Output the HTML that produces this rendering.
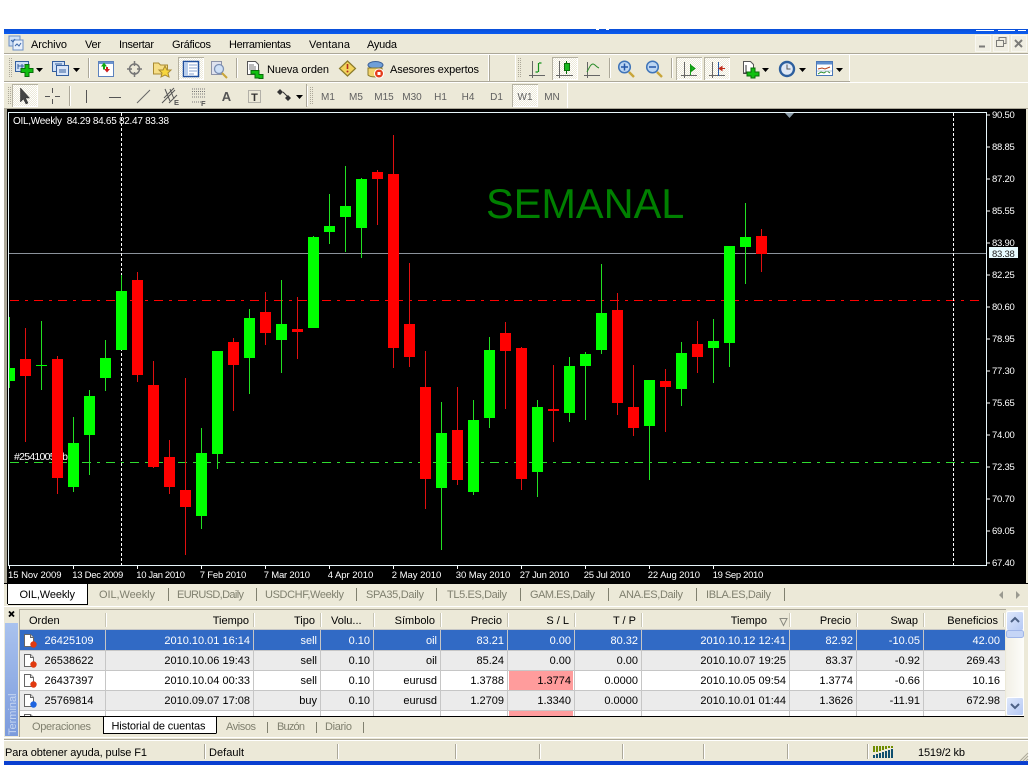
<!DOCTYPE html>
<html lang="es"><head><meta charset="utf-8"><title>MetaTrader</title>
<style>
html,body{margin:0;padding:0;background:#fff;width:1032px;height:765px;overflow:hidden}
svg{display:block;font-family:"Liberation Sans",sans-serif;font-size:11px}
.r{text-anchor:end}.m{text-anchor:middle}
.g{fill:#80806f}.tf{fill:#5f5f5f;font-size:10px;text-anchor:middle}
.c{fill:#fff;font-size:9.5px}
.p{letter-spacing:-.25px}
.w{fill:#fff}
</style></head><body>
<svg width="1032" height="765" viewBox="0 0 1032 765" xmlns="http://www.w3.org/2000/svg">
<defs>
<pattern id="dith" width="2" height="2" patternUnits="userSpaceOnUse"><rect width="2" height="2" fill="#ece9d8"/><rect width="1" height="1" fill="#fff"/><rect x="1" y="1" width="1" height="1" fill="#fff"/></pattern>
<linearGradient id="tb" x1="0" y1="0" x2="0" y2="1"><stop offset="0" stop-color="#0a4fd8"/><stop offset="1" stop-color="#0a5cf0"/></linearGradient>
<linearGradient id="side" x1="0" y1="0" x2="0" y2="1"><stop offset="0" stop-color="#a9c2ee"/><stop offset="1" stop-color="#7c9bdc"/></linearGradient>
<linearGradient id="sb" x1="0" y1="0" x2="1" y2="1"><stop offset="0" stop-color="#dfe8fb"/><stop offset="1" stop-color="#b4c8f4"/></linearGradient>
<linearGradient id="tr" x1="0" y1="0" x2="1" y2="0"><stop offset="0" stop-color="#f2f0e6"/><stop offset="1" stop-color="#fdfdfa"/></linearGradient>
<clipPath id="ch"><rect x="9" y="113" width="977" height="452"/></clipPath>
<clipPath id="tbl"><rect x="20" y="610" width="986" height="106"/></clipPath>
<g id="ord"><path d="M1.500 .5H7.500L10.500 3.500V12.500H1.500Z" fill="#fff" stroke="#666"/><path d="M7.500 .5V3.500H10.500" fill="#ddd" stroke="#666"/></g>
</defs>

<!-- window frame -->
<rect x="4" y="29" width="1024" height="736" fill="#ece9d8"/>
<rect x="4" y="29" width="1024" height="5" fill="url(#tb)"/>
<rect x="4" y="761" width="1024" height="4" fill="#0a3fd0"/>
<path d="M596 29.500h3M606 29.500h3M976 30.500h18M998 30.500h17M1018 30.500h8" stroke="#fff" fill="none"/>

<!-- menu bar -->
<g>
<rect x="9" y="36" width="11" height="10" fill="#cfe0f6" stroke="#6d8fc4"/><rect x="13" y="40" width="10" height="10" fill="#e8f0fb" stroke="#6d8fc4"/><path d="M11 40l2 2 2-3M15 46l2-2 2 2 2-3" stroke="#3a66a8" fill="none"/>
<text x="31" y="48" textLength="36">Archivo</text><text x="85" y="48" textLength="16">Ver</text><text x="119" y="48" textLength="35">Insertar</text><text x="172" y="48" textLength="39">Gráficos</text><text x="229" y="48" textLength="62">Herramientas</text><text x="309" y="48" textLength="41">Ventana</text><text x="367" y="48" textLength="30">Ayuda</text>
</g>
<!-- window buttons -->
<g fill="#f0eee2" stroke="#f8f7f1"><rect x="975.500" y="35.500" width="15" height="16"/><rect x="993.500" y="35.500" width="15" height="16"/><rect x="1011.500" y="35.500" width="15" height="16"/></g>
<path d="M979 46.500h6" stroke="#7b7b78" stroke-width="2"/>
<path d="M996.500 40.500h7v6h-7zM999 40v-2.500h7v6h-2" fill="none" stroke="#7b7b78"/>
<path d="M1015 40l7 7M1022 40l-7 7" stroke="#7b7b78" stroke-width="2"/>

<!-- toolbar lines -->
<path d="M4 53.500H1028M4 81.500H850M4 108.500H1028" stroke="#aca899"/>
<path d="M4 54.500H1028M4 82.500H1028" stroke="#fff"/>
<path d="M488.500 55V81M515.500 55V81M849.500 55V81M567.500 83V108" stroke="#fff"/>
<path d="M489.500 55V81M306.500 84V107" stroke="#aca899"/>
<path d="M9.500 58V78M11.500 58V78M518.500 58V78M520.500 58V78M8.500 87V105M10.500 87V105M310.500 87V105M312.500 87V105" stroke="#aca899" stroke-dasharray="1 1"/>
<path d="M88.500 58V78M236.500 58V78M609.500 58V78M671.500 58V78M69.500 86V106M306.500 86V106" stroke="#aca899"/>
<path d="M89.500 58V78M237.500 58V78M610.500 58V78M672.500 58V78M70.500 86V106M307.500 86V106" stroke="#fff"/>

<!-- pressed buttons -->
<g fill="url(#dith)" stroke="#b5b2a2"><rect x="178.500" y="57.500" width="25" height="22"/><rect x="552.500" y="57.500" width="25" height="22"/><rect x="676.500" y="57.500" width="25" height="22"/><rect x="704.500" y="57.500" width="25" height="22"/><rect x="12.500" y="84.500" width="25" height="22"/><rect x="512.500" y="84.500" width="25" height="22"/></g>
<path d="M203.500 58V79.500H179M577.500 58V79.500H553M701.500 58V79.500H677M729.500 58V79.500H705M37.500 85V106.500H13M537.500 85V106.500H513" stroke="#fff" fill="none"/>

<!-- toolbar 1 icons -->
<g>
<rect x="15.500" y="61.500" width="13" height="10" fill="#cfe0f6" stroke="#345f9e"/><path d="M18 64v5M22 64v5M18 66h6" stroke="#345f9e"/>
<path d="M25 64.500h4v4h4v4h-4v4h-4v-4h-4v-4h4z" fill="#11c011" stroke="#0a6d0a"/>
<path d="M36 68h7l-3.500 4z" fill="#000"/>
<rect x="52.500" y="61.500" width="12" height="10" fill="#cfe0f6" stroke="#345f9e"/><rect x="56.500" y="65.500" width="12" height="10" fill="#dbe7f8" stroke="#345f9e"/><path d="M55 64h7M59 70h7M59 72h7" stroke="#345f9e"/>
<path d="M73 68h7l-3.500 4z" fill="#000"/>
<rect x="98.500" y="61.500" width="15" height="15" fill="#fff" stroke="#5c82bd"/><rect x="99" y="62" width="14" height="2" fill="#6d95d0"/><path d="M104 62.500l3 4h-2v3h-2v-3h-2z" fill="#11a811"/><path d="M105 71.500l-3-3.500h2v-2h2v2h2z" fill="#d01f1f" transform="translate(2 1)"/>
<circle cx="134.500" cy="69" r="5" fill="none" stroke="#777" stroke-width="1.500"/><path d="M134.500 61v5M134.500 72v5M127 69h5M137 69h5" stroke="#777" stroke-width="1.500"/>
<path d="M153.500 63h5l2 2h7v9h-14z" fill="#f6de86" stroke="#a98a32"/><path d="M165 66l2 4h4l-3 3 1 4-4-2-4 2 1-4-3-3h4z" fill="#f7d63e" stroke="#a98a32"/>
<rect x="183.500" y="61.500" width="15" height="15" fill="#fff" stroke="#1f4f9e" stroke-width="1.500"/><rect x="184" y="62" width="4" height="14" fill="#b7cdec"/><path d="M189 65h8M189 68h8M189 71h8M189 74h5" stroke="#8ba6cf"/>
<rect x="211.500" y="61.500" width="10" height="13" fill="#dfe2ee" stroke="#8d93a8"/><circle cx="219" cy="69" r="4.500" fill="#cfe0f6" stroke="#7b8fb3" stroke-width="1.300"/><path d="M222 73l5 5" stroke="#c9a53a" stroke-width="2"/>
<path d="M247.500 61.500h8l3 3v10h-11z" fill="#fff" stroke="#555"/><path d="M249 65h5M249 67h7M249 69h7" stroke="#777"/>
<path d="M254 71.500h4v4h4v4h-4v-.5h-4v-4h-4v-3.500h4z" fill="#11c011" stroke="#0a6d0a" transform="translate(1 -1)"/>
<text x="267" y="73" textLength="62">Nueva orden</text>
<path d="M347.500 61l8 7.500-8 7.500-8-7.500z" fill="#f2d35c" stroke="#8a7a2a" stroke-width="1.200"/><path d="M347.500 64v5" stroke="#b3301d" stroke-width="1.600"/><circle cx="347.500" cy="71.500" r="1" fill="#b3301d"/>
<ellipse cx="375.500" cy="65" rx="7.500" ry="3.500" fill="#6f9fd8" stroke="#3a5f98"/><path d="M368 68h14v7c-2 2-11 3-14 0z" fill="#f2d36d" stroke="#8a7a2a"/><circle cx="379" cy="73.500" r="4.500" fill="#e53d1c" stroke="#fff"/><rect x="377.500" y="72" width="3" height="3" fill="#fff"/>
<text x="390" y="73" textLength="89">Asesores expertos</text>
</g>

<!-- chart type icons etc -->
<g fill="none" stroke="#666">
<path d="M532.500 61V78M529 75.500h16"/><path d="M538.500 63V72M538 72h-2.500M539 63h2.500" stroke="#13921a" stroke-width="1.200"/>
<path d="M559.500 61V78M556 75.500h17"/><path d="M566.500 61V74" stroke="#0a6d0a"/><rect x="564.500" y="63.500" width="5" height="7" fill="#17b81e" stroke="#0a6d0a"/>
<path d="M587.500 62V78M584 75.500h16"/><path d="M587 72c3-6 4-8 6-8s3 3 6 4" stroke="#2a8c2a"/>
<path d="M684.500 62V78M681 75.500h16"/><path d="M690.500 64V75" stroke="#17a81e"/><path d="M691 65.500l4 3-4 3z" fill="#17b81e" stroke="#0a8c0a"/>
<path d="M712.500 62V78M709 75.500h16"/><path d="M718.500 62V76" stroke="#2457a8"/><path d="M725 68.500h-5" stroke="#c02a1a"/><path d="M722 66.500l-3 2 3 2z" fill="#c02a1a" stroke="#c02a1a"/>
</g>
<g>
<circle cx="624.500" cy="67" r="5.800" fill="#bcd6f2" stroke="#3f74b8" stroke-width="1.500"/><path d="M621 67h7M624.500 63.500v7" stroke="#2457a8" stroke-width="1.500"/><path d="M629 72l5 5" stroke="#c9a53a" stroke-width="2.400"/>
<circle cx="652.500" cy="67" r="5.800" fill="#bcd6f2" stroke="#3f74b8" stroke-width="1.500"/><path d="M649 67h7" stroke="#2457a8" stroke-width="1.500"/><path d="M657 72l5 5" stroke="#c9a53a" stroke-width="2.400"/>
<path d="M743.500 61.500h7l3 3v9h-10z" fill="#fff" stroke="#555"/><path d="M746 65v8M746 73h-2" stroke="#333"/>
<path d="M751 69h4v4h4v4h-4v2h-4v-2h-4v-4h4z" fill="#11c011" stroke="#0a6d0a" transform="translate(0 -1)"/>
<path d="M762 68h7l-3.500 4z" fill="#000"/>
<circle cx="787" cy="69" r="7" fill="#dfe8f5" stroke="#2d5f9e" stroke-width="2.400"/><path d="M787 64.500V69h3.500" stroke="#555" fill="none"/>
<path d="M799 68h7l-3.500 4z" fill="#000"/>
<rect x="816.500" y="61.500" width="16" height="14" fill="#fff" stroke="#4a77b8"/><rect x="817" y="62" width="15" height="2.500" fill="#5d8ccc"/><path d="M818 69l4-1 3 1 5-2" stroke="#b8401c" fill="none"/><path d="M818 74l3-2 3 1 3-2 3 2" stroke="#2a8c2a" fill="none"/><path d="M817 71h15" stroke="#b8c9de"/>
<path d="M836 68h7l-3.500 4z" fill="#000"/>
</g>

<!-- toolbar 2 icons -->
<g>
<path d="M20.500 88v14l3-3 2.500 5 2-1-2.500-5h4z" fill="#444" stroke="#222" stroke-width=".5"/>
<path d="M52.500 88v5M52.500 99v5M45 96.500h5M55 96.500h5" stroke="#555"/>
<path d="M86.500 90v13" stroke="#555"/>
<path d="M109 97.500h12" stroke="#555"/>
<path d="M137 103l13-13" stroke="#666"/>
<path d="M164 98l10-10M162 103l13-13M169 103l8-8M165 89l5 12M170 89l4 10" stroke="#555" fill="none"/><text x="174" y="105" font-size="7.500" font-weight="bold" fill="#555">E</text>
<path d="M192 89h13M192 91.500h13M192 94h13M192 97h13M192 102h9" stroke="#777" stroke-dasharray="1 1"/><text x="201" y="106" font-size="7.500" font-weight="bold" fill="#555">F</text>
<text x="226.500" y="101" class="m" font-size="13" font-weight="bold" fill="#555">A</text>
<rect x="248.500" y="90.500" width="12" height="12" fill="none" stroke="#777" stroke-dasharray="1 1"/><text x="254.500" y="101" class="m" font-size="11" font-weight="bold" fill="#333">T</text>
<path d="M280 89l3 3-3 3-3-3zM288 95l3 3-3 3-3-3z" fill="#333"/><path d="M283 92l5 5" stroke="#333"/>
<path d="M296 95h7l-3.500 4z" fill="#000"/>
<g class="tf"><text x="328" y="100">M1</text><text x="356" y="100">M5</text><text x="384" y="100">M15</text><text x="412" y="100">M30</text><text x="440.500" y="100">H1</text><text x="468" y="100">H4</text><text x="496.500" y="100">D1</text><text x="525" y="100">W1</text><text x="552" y="100">MN</text></g>
</g>

<!-- chart -->
<rect x="7" y="109" width="1019" height="474" fill="#000"/>
<rect x="4" y="109" width="3" height="474" fill="#aca899"/>
<g clip-path="url(#ch)" shape-rendering="crispEdges">
<path d="M9 253.500H986" stroke="#8b929b"/>
<path d="M10 300.500H980" stroke="#f00" stroke-dasharray="9 6 3 6"/>
<path d="M10 462.500H980" stroke="#2fdc2f" stroke-dasharray="9 6 3 6"/>
<path d="M121.500 113V565M953.500 113V565" stroke="#fff" stroke-dasharray="3 2"/>
</g>
<text x="14" y="460" class="c" textLength="54" style="font-size:10.500px">#25410059 b</text>
<text x="486" y="218" font-size="41.500" fill="#008000">SEMANAL</text>
<g clip-path="url(#ch)" shape-rendering="crispEdges" fill="none">
<path stroke="#22e022" d="M9.500 317V388M41.500 321V390M73.500 417V492M89.500 390V475M105.500 340V391M121.500 275V350M201.500 428V529M217.500 351V469M249.500 309V394M281.500 280V373M313.500 236V328M329.500 194V244M345.500 166V252M361.500 178V258M441.500 402V550M473.500 400V495M489.500 337V428M537.500 400V497M569.500 357V422M585.500 352V420M601.500 264V354M649.500 380V480M681.500 342V406M713.500 319V383M729.500 246V367M745.500 203V284"/>
<path stroke="#e01010" d="M25.500 328V442M57.500 356V494M137.500 272V382M153.500 361V468M169.500 440V494M185.500 378V555M233.500 338V411M265.500 292V345M297.500 297V359M377.500 170V225M393.500 135V368M409.500 263V367M425.500 351V509M457.500 387V485M505.500 322V409M521.500 347V490M553.500 365V442M617.500 293V415M633.500 365V436M665.500 369V432M697.500 321V373M761.500 229V272"/>
<path stroke="#0f0" stroke-width="11" d="M9.500 368V381M41.500 365V366M73.500 443V487M89.500 396V435M105.500 358V378M121.500 291V350M201.500 453V516M217.500 351V454M249.500 318V358M281.500 324V340M313.500 237V328M329.500 226V232M345.500 206V217M361.500 179V228M441.500 433V488M473.500 420V492M489.500 350V418M537.500 407V472M569.500 366V413M585.500 354V366M601.500 313V350M649.500 380V426M681.500 353V389M713.500 341V348M729.500 246V343M745.500 237V247"/>
<path stroke="#f00" stroke-width="11" d="M25.500 359V376M57.500 359V478M137.500 280V375M153.500 385V467M169.500 457V487M185.500 490V507M233.500 342V365M265.500 312V333M297.500 329V332M377.500 172V179M393.500 174V348M409.500 324V357M425.500 387V479M457.500 430V480M505.500 333V351M521.500 348V479M553.500 409V411M617.500 310V403M633.500 407V428M665.500 381V387M697.500 344V357M761.500 236V254"/>
</g>
<g shape-rendering="crispEdges" fill="none">
<rect x="8.500" y="112.500" width="978" height="453" stroke="#e8f6fa"/>
<path stroke="#fff" d="M987 115h3M987 147h3M987 179h3M987 211h3M987 243h3M987 275h3M987 307h3M987 339h3M987 371h3M987 403h3M987 435h3M987 467h3M987 499h3M987 531h3M987 563h3M9.500 566v3M73.500 566v3M137.500 566v3M201.500 566v3M265.500 566v3M329.500 566v3M393.500 566v3M457.500 566v3M521.500 566v3M585.500 566v3M649.500 566v3M713.500 566v3"/>
</g>
<path d="M785 113h9l-4.500 5z" fill="#8a9ba8"/>
<text x="13" y="124" class="c" xml:space="preserve" style="font-size:10px" textLength="156">OIL,Weekly  84.29 84.65 82.47 83.38</text>
<g class="c p"><text x="992" y="118">90.50</text><text x="992" y="150">88.85</text><text x="992" y="182">87.20</text><text x="992" y="214">85.55</text><text x="992" y="246">83.90</text><text x="992" y="278">82.25</text><text x="992" y="310">80.60</text><text x="992" y="342">78.95</text><text x="992" y="374">77.30</text><text x="992" y="406">75.65</text><text x="992" y="438">74.00</text><text x="992" y="470">72.35</text><text x="992" y="502">70.70</text><text x="992" y="534">69.05</text><text x="992" y="566">67.40</text></g>
<rect x="989" y="247" width="29" height="11" fill="#e8fbff"/>
<text x="992" y="257" font-size="9.500" fill="#222" class="p">83.38</text>
<g class="c"><text x="8" y="578" textLength="53.500">15 Nov 2009</text><text x="72.300" y="578" textLength="51">13 Dec 2009</text><text x="136.300" y="578" textLength="48.700">10 Jan 2010</text><text x="199.700" y="578" textLength="46.600">7 Feb 2010</text><text x="263.700" y="578" textLength="46.300">7 Mar 2010</text><text x="327.700" y="578" textLength="45.600">4 Apr 2010</text><text x="391.700" y="578" textLength="49.600">2 May 2010</text><text x="455.700" y="578" textLength="54.600">30 May 2010</text><text x="519.700" y="578" textLength="49.600">27 Jun 2010</text><text x="583.700" y="578" textLength="46.600">25 Jul 2010</text><text x="647.700" y="578" textLength="52.300">22 Aug 2010</text><text x="712.700" y="578" textLength="50.600">19 Sep 2010</text></g>

<!-- chart tabs -->
<path d="M4 583.500H1028" stroke="#000"/>
<rect x="8" y="584" width="79" height="20" fill="#fff"/><path d="M7.500 584v20M87.500 584v20.500H8M8 604.500H87" stroke="#000" fill="none"/>
<text x="19.500" y="598" textLength="55.500">OIL,Weekly</text>
<g class="g"><text x="99" y="598" textLength="56">OIL,Weekly</text><text x="177" y="598" textLength="67">EURUSD,Daily</text><text x="265" y="598" textLength="79">USDCHF,Weekly</text><text x="366" y="598" textLength="58">SPA35,Daily</text><text x="447" y="598" textLength="60">TL5.ES,Daily</text><text x="530" y="598" textLength="65">GAM.ES,Daily</text><text x="619" y="598" textLength="64">ANA.ES,Daily</text><text x="706" y="598" textLength="65">IBLA.ES,Daily</text></g>
<path d="M168.500 588V601M256.500 588V601M356.500 588V601M436.500 588V601M520.500 588V601M608.500 588V601M696.500 588V601M784.500 588V601" stroke="#80806f"/>
<path d="M1003 591v8l-4-4zM1016 591v8l4-4z" fill="#9a9a90"/>

<!-- terminal -->
<path d="M4 606.500H1028" stroke="#fff"/>
<path d="M8 612l5 5M13 612l-5 5" stroke="#000" stroke-width="1.800" transform="translate(1 -.5)"/>
<rect x="5" y="623" width="13" height="113" fill="url(#side)"/>
<text transform="translate(16 735) rotate(-90)" fill="#c5d5f1" font-size="11">Terminal</text>
<path d="M19.500 609V737" stroke="#aca899"/>
<path d="M20 609.500H1006" stroke="#aca899"/>

<!-- table -->
<g clip-path="url(#tbl)">
<rect x="20" y="610" width="986" height="20" fill="#ece9d8"/>
<rect x="20" y="630" width="985" height="20" fill="#316ac5"/>
<rect x="20" y="650" width="985" height="20" fill="#ebebeb"/>
<rect x="20" y="670" width="985" height="20" fill="#fff"/>
<rect x="20" y="690" width="985" height="20" fill="#ebebeb"/>
<rect x="20" y="710" width="985" height="6" fill="#fff"/>
<rect x="509" y="671" width="64" height="19" fill="#ff9c9c"/>
<rect x="509" y="711" width="64" height="6" fill="#ff9c9c"/>
<path d="M20 629.500H1005M20 650.500H1005M20 670.500H1005M20 690.500H1005M20 710.500H1005" stroke="#c6c6c6" shape-rendering="crispEdges"/>
<path d="M105.500 630V716M253.500 630V716M320.500 630V716M373.500 630V716M440.500 630V716M507.500 630V716M574.500 630V716M641.500 630V716M789.500 630V716M856.500 630V716M923.500 630V716" stroke="#c6c6c6"/>
<path d="M105.500 613V627M253.500 613V627M320.500 613V627M373.500 613V627M440.500 613V627M507.500 613V627M574.500 613V627M641.500 613V627M789.500 613V627M856.500 613V627M923.500 613V627M1003.500 613V627" stroke="#c8c5b4"/>
<path d="M106.500 613V627M254.500 613V627M321.500 613V627M374.500 613V627M441.500 613V627M508.500 613V627M575.500 613V627M642.500 613V627M790.500 613V627M857.500 613V627M924.500 613V627M1004.500 613V627" stroke="#fff"/>
<use href="#ord" x="23" y="634"/><use href="#ord" x="23" y="654"/><use href="#ord" x="23" y="674"/><use href="#ord" x="23" y="694"/><use href="#ord" x="23" y="714"/>
<circle cx="33.500" cy="644.500" r="3.200" fill="#e03a10"/><circle cx="33.500" cy="664.500" r="3.200" fill="#e03a10"/><circle cx="33.500" cy="684.500" r="3.200" fill="#e03a10"/><circle cx="33.500" cy="704.500" r="3.200" fill="#1e64e0"/>
<text x="29" y="624">Orden</text><text x="249" y="624" class="r">Tiempo</text><text x="315" y="624" class="r">Tipo</text><text x="331" y="624">Volu...</text><text x="435" y="624" class="r">Símbolo</text><text x="502" y="624" class="r">Precio</text><text x="569" y="624" class="r">S / L</text><text x="636" y="624" class="r">T / P</text><text x="767" y="624" class="r">Tiempo</text><path d="M780 618.500h7l-3.500 7z" fill="none" stroke="#8a8a80"/><text x="851" y="624" class="r">Precio</text><text x="918" y="624" class="r">Swap</text><text x="998" y="624" class="r">Beneficios</text>
<g class="w"><text x="44.500" y="644" fill="#fff">26425109</text><text class="r" x="250" y="644">2010.10.01 16:14</text><text class="r" x="317" y="644">sell</text><text class="r" x="370" y="644">0.10</text><text class="r" x="437" y="644">oil</text><text class="r" x="504" y="644">83.21</text><text class="r" x="571" y="644">0.00</text><text class="r" x="638" y="644">80.32</text><text class="r" x="786" y="644">2010.10.12 12:41</text><text class="r" x="853" y="644">82.92</text><text class="r" x="920" y="644">-10.05</text><text class="r" x="1000" y="644">42.00</text></g>
<g><text x="44.500" y="664">26538622</text><text class="r" x="250" y="664">2010.10.06 19:43</text><text class="r" x="317" y="664">sell</text><text class="r" x="370" y="664">0.10</text><text class="r" x="437" y="664">oil</text><text class="r" x="504" y="664">85.24</text><text class="r" x="571" y="664">0.00</text><text class="r" x="638" y="664">0.00</text><text class="r" x="786" y="664">2010.10.07 19:25</text><text class="r" x="853" y="664">83.37</text><text class="r" x="920" y="664">-0.92</text><text class="r" x="1000" y="664">269.43</text></g>
<g><text x="44.500" y="684">26437397</text><text class="r" x="250" y="684">2010.10.04 00:33</text><text class="r" x="317" y="684">sell</text><text class="r" x="370" y="684">0.10</text><text class="r" x="437" y="684">eurusd</text><text class="r" x="504" y="684">1.3788</text><text class="r" x="571" y="684">1.3774</text><text class="r" x="638" y="684">0.0000</text><text class="r" x="786" y="684">2010.10.05 09:54</text><text class="r" x="853" y="684">1.3774</text><text class="r" x="920" y="684">-0.66</text><text class="r" x="1000" y="684">10.16</text></g>
<g><text x="44.500" y="704">25769814</text><text class="r" x="250" y="704">2010.09.07 17:08</text><text class="r" x="317" y="704">buy</text><text class="r" x="370" y="704">0.10</text><text class="r" x="437" y="704">eurusd</text><text class="r" x="504" y="704">1.2709</text><text class="r" x="571" y="704">1.3340</text><text class="r" x="638" y="704">0.0000</text><text class="r" x="786" y="704">2010.10.01 01:44</text><text class="r" x="853" y="704">1.3626</text><text class="r" x="920" y="704">-11.91</text><text class="r" x="1000" y="704">672.98</text></g>
</g>

<!-- scrollbar -->
<rect x="1006" y="610" width="18" height="106" fill="url(#tr)"/>
<rect x="1006.500" y="611.500" width="17" height="19" rx="2" fill="url(#sb)" stroke="#fff"/>
<rect x="1006.500" y="630.500" width="17" height="7" rx="2" fill="#c5d5f6" stroke="#9fb5e8"/>
<rect x="1006.500" y="697.500" width="17" height="18" rx="2" fill="url(#sb)" stroke="#fff"/>
<path d="M1011 622l4-4 4 4M1011 704l4 4 4-4" fill="none" stroke="#4d6185" stroke-width="2"/>

<!-- terminal tabs -->
<path d="M20 716.500H1024" stroke="#000"/>
<rect x="103" y="717" width="113" height="16" fill="#fff"/><path d="M103.500 716v17.500H216M216.500 717V733.500" stroke="#000" fill="none"/>
<text x="111.500" y="729.500" textLength="94">Historial de cuentas</text>
<g class="g"><text x="32" y="730" textLength="59">Operaciones</text><text x="226" y="730" textLength="30">Avisos</text><text x="277" y="730" textLength="28">Buzón</text><text x="325" y="730" textLength="27">Diario</text></g>
<path d="M267.500 722V733M316.500 722V733M363.500 722V733" stroke="#80806f"/>
<path d="M4 737.500H1028" stroke="#fff"/>
<path d="M4 739.500H1028" stroke="#aca899"/>
<path d="M4 740.500H1028" stroke="#fff"/>

<!-- status bar -->
<text x="5" y="756" textLength="142">Para obtener ayuda, pulse F1</text>
<text x="209" y="756" textLength="35">Default</text>
<path d="M204.500 744V759M337.500 744V759M455.500 744V759M539.500 744V759M622.500 744V759M703.500 744V759M787.500 744V759M867.500 744V759" stroke="#aca899"/>
<path d="M205.500 744V759M338.500 744V759M456.500 744V759M540.500 744V759M623.500 744V759M704.500 744V759M788.500 744V759M868.500 744V759" stroke="#fff"/>
<g shape-rendering="crispEdges">
<path d="M873 746h2v6h-2zM876 746h2v6h-2zM879 746h2v5h-2zM882 746h2v4h-2zM885 746h2v3h-2zM888 746h2v2h-2zM891 746h2v2h-2z" fill="#6f8c00"/>
<path d="M873 755h2v3h-2zM876 754h2v4h-2zM879 753h2v5h-2zM882 752h2v6h-2zM885 751h2v7h-2zM888 750h2v8h-2zM891 749h2v9h-2z" fill="#0f4f6f"/>
</g>
<text x="918" y="756" textLength="47">1519/2 kb</text>
<path d="M1020 761l8-8M1023 761l5-5M1026 761l2-2" stroke="#aca899"/>
</svg>
</body></html>
